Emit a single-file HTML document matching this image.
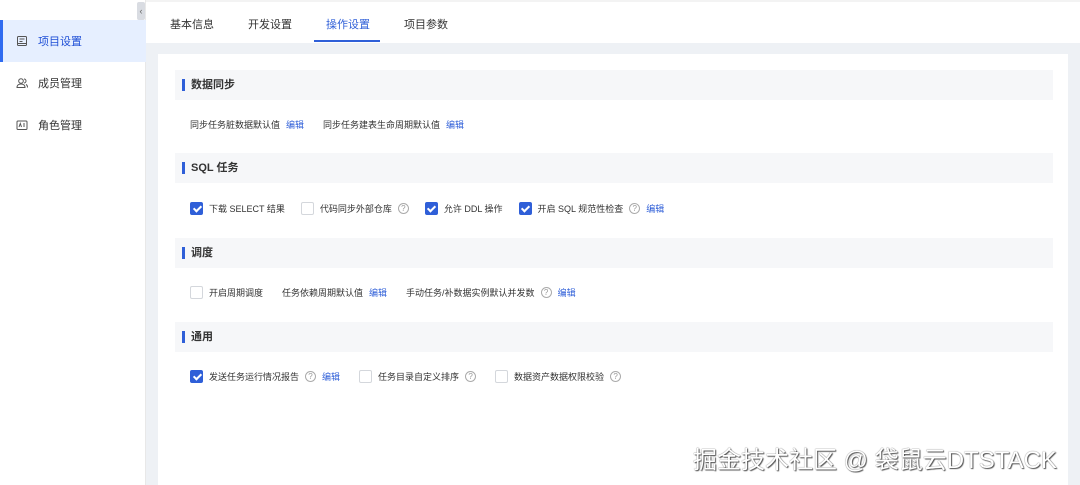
<!DOCTYPE html>
<html><head><meta charset="utf-8"><style>
*{margin:0;padding:0;box-sizing:border-box}
html,body{width:1080px;height:485px;overflow:hidden}
body{background:#eef1f5;font-family:"Liberation Sans","Noto Sans CJK SC",sans-serif;color:#333;position:relative}
.side{position:absolute;left:0;top:0;width:146px;height:485px;background:#fff;border-right:1px solid #e8e8e8}
.item{position:absolute;left:0;width:146px;height:42px;display:flex;align-items:center;font-size:11px;color:#333}
.item.act{background:#e6efff;color:#1f4fd6;border-left:3px solid #2f6bf0}
.item svg{margin-left:16px;margin-right:10px}
.item.act svg{margin-left:13px}
.coll{position:absolute;left:137px;top:2px;width:8px;height:18px;background:#d9dce2;border-radius:2px;font-size:9px;color:#666;text-align:center;line-height:18px}
.tabs{position:absolute;left:146px;top:0;right:0;height:43px;background:#fff;border-top:2px solid #f3f3f3}
.tab{position:absolute;top:14px;font-size:11px;color:#333}
.tab.act{color:#2f5fd8}
.ink{position:absolute;left:314px;top:40px;width:66px;height:2px;background:#2f5fd8}
.card{position:absolute;left:158px;top:54px;width:910px;height:431px;background:#fff}
.hd{position:absolute;left:17px;width:878px;height:30px;background:#f6f7f9;font-size:11px;font-weight:bold;color:#333;line-height:30px;padding-left:16px}
.hd:before{content:"";position:absolute;left:7px;top:9px;width:3px;height:12px;background:#2f5fd8}
.row{position:absolute;left:32px;font-size:9px;color:#333;display:flex;align-items:center;white-space:nowrap;height:14px}
.cb{width:13px;height:13px;border:1px solid #d4d7dc;border-radius:2px;margin-right:6px;background:#fff;display:inline-block;position:relative}
.cb.on{background:#2f5fd8;border-color:#2f5fd8}
.cb.on:after{content:"";position:absolute;left:3.5px;top:1px;width:3px;height:6px;border:solid #fff;border-width:0 2px 2px 0;transform:rotate(45deg)}
.q{display:inline-block;width:11px;height:11px;border:1px solid #aaa;border-radius:50%;font-size:8px;line-height:9px;text-align:center;color:#999;margin-left:6px}
.ed{color:#2f5fd8;margin-left:6px}
.gap{width:16px;display:inline-block}
.g2{width:19px;display:inline-block}
.wm{position:absolute;left:693px;top:440px;font-size:24px;color:#fff;text-shadow:0 0 1px #444,1px 1px 1px #555}
</style></head><body>
<div class="side">
<div class="coll">‹</div>
<div class="item act" style="top:20px"><svg width="12" height="12" viewBox="0 0 12 12" fill="none" stroke="#555" stroke-width="1"><rect x="1.5" y="1.5" width="9" height="9" rx="1"/><path d="M3.5 4h5M3.5 6.5h3M1.5 8.5h9"/></svg>项目设置</div>
<div class="item" style="top:62px"><svg width="12" height="12" viewBox="0 0 12 12" fill="none" stroke="#555" stroke-width="1"><circle cx="5" cy="4" r="2.3"/><path d="M1 10.5c0-2.5 2-3.5 4-3.5s4 1 4 3.5zM8 2a2 2 0 010 4M10 7.5c1 .5 1.5 1.5 1.5 3"/></svg>成员管理</div>
<div class="item" style="top:104px"><svg width="12" height="12" viewBox="0 0 12 12" fill="none" stroke="#555" stroke-width="1"><rect x="1" y="2" width="10" height="8.5" rx="1"/><path d="M3 8l1.3-3.5L5.5 8M7 5h2M7 7h2"/></svg>角色管理</div>
</div>
<div class="tabs">
<div class="tab" style="left:24px">基本信息</div>
<div class="tab" style="left:102px">开发设置</div>
<div class="tab act" style="left:180px">操作设置</div>
<div class="tab" style="left:258px">项目参数</div>
</div>
<div class="ink"></div>
<div class="card">
<div class="hd" style="top:16px">数据同步</div>
<div class="row" style="top:63px">同步任务脏数据默认值<span class="ed">编辑</span><span class="g2"></span>同步任务建表生命周期默认值<span class="ed">编辑</span></div>
<div class="hd" style="top:99px">SQL 任务</div>
<div class="row" style="top:147px"><span class="cb on"></span>下载 SELECT 结果<span class="gap"></span><span class="cb"></span>代码同步外部仓库<span class="q">?</span><span class="gap"></span><span class="cb on"></span>允许 DDL 操作<span class="gap"></span><span class="cb on"></span>开启 SQL 规范性检查<span class="q">?</span><span class="ed">编辑</span></div>
<div class="hd" style="top:184px">调度</div>
<div class="row" style="top:231px"><span class="cb"></span>开启周期调度<span class="g2"></span>任务依赖周期默认值<span class="ed">编辑</span><span class="g2"></span>手动任务/补数据实例默认并发数<span class="q">?</span><span class="ed">编辑</span></div>
<div class="hd" style="top:268px">通用</div>
<div class="row" style="top:315px"><span class="cb on"></span>发送任务运行情况报告<span class="q">?</span><span class="ed">编辑</span><span class="g2"></span><span class="cb"></span>任务目录自定义排序<span class="q">?</span><span class="g2"></span><span class="cb"></span>数据资产数据权限校验<span class="q">?</span></div>
</div>
<div class="wm">掘金技术社区 @ 袋鼠云DTSTACK</div>
</body></html>
